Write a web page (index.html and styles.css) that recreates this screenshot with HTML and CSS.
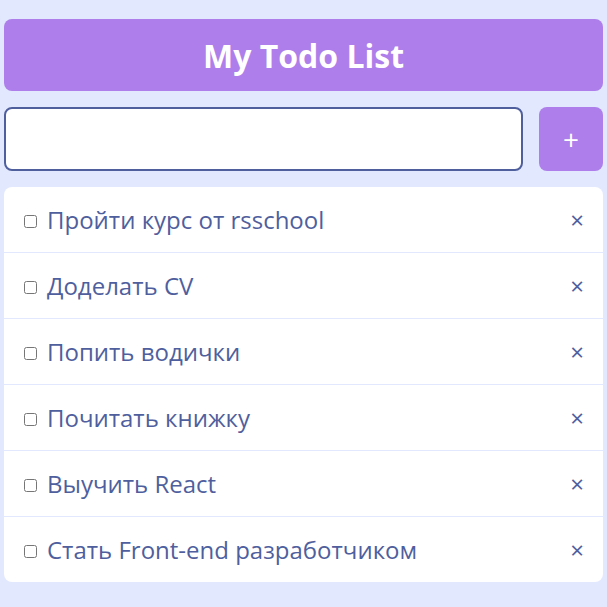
FILE: index.html
```html
<!DOCTYPE html>
<html lang="ru">
<head>
<meta charset="utf-8">
<title>My Todo List</title>
<link rel="stylesheet" href="styles.css">
</head>
<body>
<div class="app">
  <h1 class="title">My Todo List</h1>
  <form class="add-form">
    <input class="add-input" type="text">
    <button class="add-btn" type="button">+</button>
  </form>
  <ul class="list">
    <li class="item"><input type="checkbox" class="check"><span class="text">Пройти курс от rsschool</span><button class="del" type="button">×</button></li>
    <li class="item"><input type="checkbox" class="check"><span class="text">Доделать CV</span><button class="del" type="button">×</button></li>
    <li class="item"><input type="checkbox" class="check"><span class="text">Попить водички</span><button class="del" type="button">×</button></li>
    <li class="item"><input type="checkbox" class="check"><span class="text">Почитать книжку</span><button class="del" type="button">×</button></li>
    <li class="item"><input type="checkbox" class="check"><span class="text">Выучить React</span><button class="del" type="button">×</button></li>
    <li class="item"><input type="checkbox" class="check"><span class="text">Стать Front-end разработчиком</span><button class="del" type="button">×</button></li>
  </ul>
</div>
</body>
</html>
```
FILE: styles.css
```css
html, body {
  margin: 0;
  padding: 0;
  background: #e2e8fe;
  font-family: "Open Sans", "Noto Sans", sans-serif;
}
.app {
  padding: 19px 4px 0;
  display: flex;
  flex-direction: column;
  gap: 16px;
}
.title {
  margin: 0;
  height: 72px;
  background: #ae7eea;
  border-radius: 8px;
  color: #fff;
  font-size: 32px;
  font-weight: 700;
  display: flex;
  align-items: center;
  justify-content: center;
}
.add-form {
  margin: 0;
  display: flex;
  gap: 16px;
}
.add-input {
  flex: 1;
  height: 64px;
  box-sizing: border-box;
  border: 2px solid #4f5f9e;
  border-radius: 8px;
  background: #fff;
  outline: none;
  font-family: inherit;
  font-size: 22px;
  padding: 0 12px;
}
.add-btn {
  width: 64px;
  height: 64px;
  border: none;
  border-radius: 8px;
  background: #ae7eea;
  color: #fff;
  font-family: inherit;
  font-size: 28px;
  padding: 0;
}
.list {
  list-style: none;
  margin: 0;
  padding: 0;
  background: #fff;
  border-radius: 8px;
}
.item {
  height: 65px;
  display: flex;
  align-items: center;
  padding: 0 19px 0 20px;
  border-bottom: 1px solid #e2e8fe;
  color: #4f5f9e;
  font-size: 24px;
}
.item:last-child {
  border-bottom: none;
}
.check {
  margin: 4px 10px 0 0;
  width: 13px;
  height: 13px;
}
.text {
  flex: 1;
}
.del {
  border: none;
  background: none;
  color: #4f5f9e;
  font-family: inherit;
  font-size: 24px;
  padding: 0;
  line-height: 1;
}
```
